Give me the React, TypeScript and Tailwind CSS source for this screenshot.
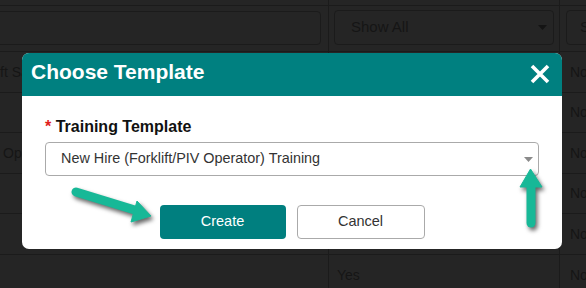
const rows = [
  { h: "h-[41px]", left: "ft Sa", mid: "", right: "No", lpad: "pl-0" },
  { h: "h-[40px]", left: "", mid: "", right: "No", lpad: "pl-0" },
  { h: "h-[41px]", left: "Ope", mid: "", right: "No", lpad: "pl-[3px]" },
  { h: "h-[40px]", left: "", mid: "", right: "No", lpad: "pl-0" },
  { h: "h-[41px]", left: "", mid: "", right: "No", lpad: "pl-0" },
  { h: "h-[41px]", left: "", mid: "Yes", right: "No", lpad: "pl-0" },
];

function Caret({ className }: { className: string }) {
  return (
    <svg width="9" height="5" viewBox="0 0 9 5" className={className}>
      <path d="M0 0 L9 0 L4.5 5 Z" fill="currentColor" />
    </svg>
  );
}

function BackgroundTable() {
  return (
    <div className="flex flex-col text-[14px] text-[#151515]">
      <div className="flex h-[6px] border-b border-[#1b1b1b]">
        <div className="w-[329px] border-r border-[#1b1b1b]" />
        <div className="w-[231px] border-r border-[#1b1b1b]" />
        <div className="flex-1" />
      </div>
      <div className="flex h-[46px] border-b border-[#1b1b1b]">
        <div className="w-[329px] border-r border-[#1b1b1b] overflow-hidden">
          <div className="ml-[-10px] mr-[7px] mt-[5px] h-[34px] rounded-[4px] border border-[#1b1b1b]" />
        </div>
        <div className="w-[231px] border-r border-[#1b1b1b] px-[5px] pt-[4px]">
          <div className="flex h-[35px] items-center justify-between rounded-[4px] border border-[#1b1b1b] pl-[16px] pr-[6px]">
            <span className="text-[15px]">Show All</span>
            <Caret className="text-[#141414]" />
          </div>
        </div>
        <div className="flex-1 overflow-hidden pl-[6px] pt-[4px]">
          <div className="flex h-[35px] w-[40px] items-center rounded-l-[4px] border border-[#1b1b1b] pl-[13px] text-[15px]">
            S
          </div>
        </div>
      </div>
      {rows.map((r, i) => (
        <div key={i} className={`flex ${r.h} border-b border-[#1b1b1b]`}>
          <div className={`flex w-[329px] items-center overflow-hidden whitespace-nowrap border-r border-[#1b1b1b] ${r.lpad}`}>
            <span className="block w-[22px] overflow-hidden">{r.left}</span>
          </div>
          <div className="flex w-[231px] items-center border-r border-[#1b1b1b] pl-[8px]">{r.mid}</div>
          <div className="flex flex-1 items-center overflow-hidden whitespace-nowrap pl-[10px]">{r.right}</div>
        </div>
      ))}
    </div>
  );
}

function CloseIcon() {
  return (
    <svg width="20" height="20" viewBox="0 0 20 20" className="mt-[4px]">
      <path d="M2 2 L18 18 M18 2 L2 18" stroke="white" strokeWidth="3.6" strokeLinecap="butt" />
    </svg>
  );
}

function Modal() {
  return (
    <div className="absolute left-[22px] top-[53px] flex h-[196px] w-[540px] flex-col overflow-hidden rounded-[7px] bg-white">
      <div className="flex h-[43px] items-start justify-between bg-[#008080] pl-[9px] pr-[12px] pt-[7px]">
        <h2 className="text-[21px] font-bold leading-[24px] text-white">Choose Template</h2>
        <CloseIcon />
      </div>
      <div className="flex flex-1 flex-col px-[23px] pt-[21px]">
        <label className="text-[16px] font-bold leading-[20px] text-[#111]">
          <span className="text-[#e0201b]">*</span> Training Template
        </label>
        <div className="mt-[5px] flex h-[34px] items-center justify-between rounded-[4px] border border-[#aaaaaa] pl-[15px] pr-[5px]">
          <span className="text-[14.4px] text-[#333]">New Hire (Forklift/PIV Operator) Training</span>
          <Caret className="text-[#8a8a8a]" />
        </div>
        <div className="mt-[29px] flex justify-center gap-[11px]">
          <button className="h-[34px] w-[126px] rounded-[4px] bg-[#007f7f] text-[14.5px] text-white">Create</button>
          <button className="h-[34px] w-[128px] rounded-[4px] border border-[#aaaaaa] bg-white text-[14.5px] text-[#333]">
            Cancel
          </button>
        </div>
      </div>
    </div>
  );
}

function Arrows() {
  return (
    <svg
      width="586"
      height="288"
      viewBox="0 0 586 288"
      className="pointer-events-none absolute left-0 top-0 drop-shadow-[2px_3px_2px_rgba(0,0,0,0.6)]"
    >
      <g fill="#17b897" stroke="#17b897">
        <line x1="76" y1="192" x2="138" y2="211" strokeWidth="9" strokeLinecap="round" />
        <polygon points="151,216 137,201 131,222" strokeWidth="1" strokeLinejoin="round" />
        <line x1="531" y1="223" x2="531" y2="184" strokeWidth="9" strokeLinecap="round" />
        <polygon points="530.5,169 520,187 542,187" strokeWidth="1" strokeLinejoin="round" />
      </g>
    </svg>
  );
}

export default function App() {
  return (
    <div className="relative h-[288px] w-[586px] overflow-hidden bg-[#252525] font-['Liberation_Sans',Arial,sans-serif]">
      <BackgroundTable />
      <Modal />
      <Arrows />
    </div>
  );
}
